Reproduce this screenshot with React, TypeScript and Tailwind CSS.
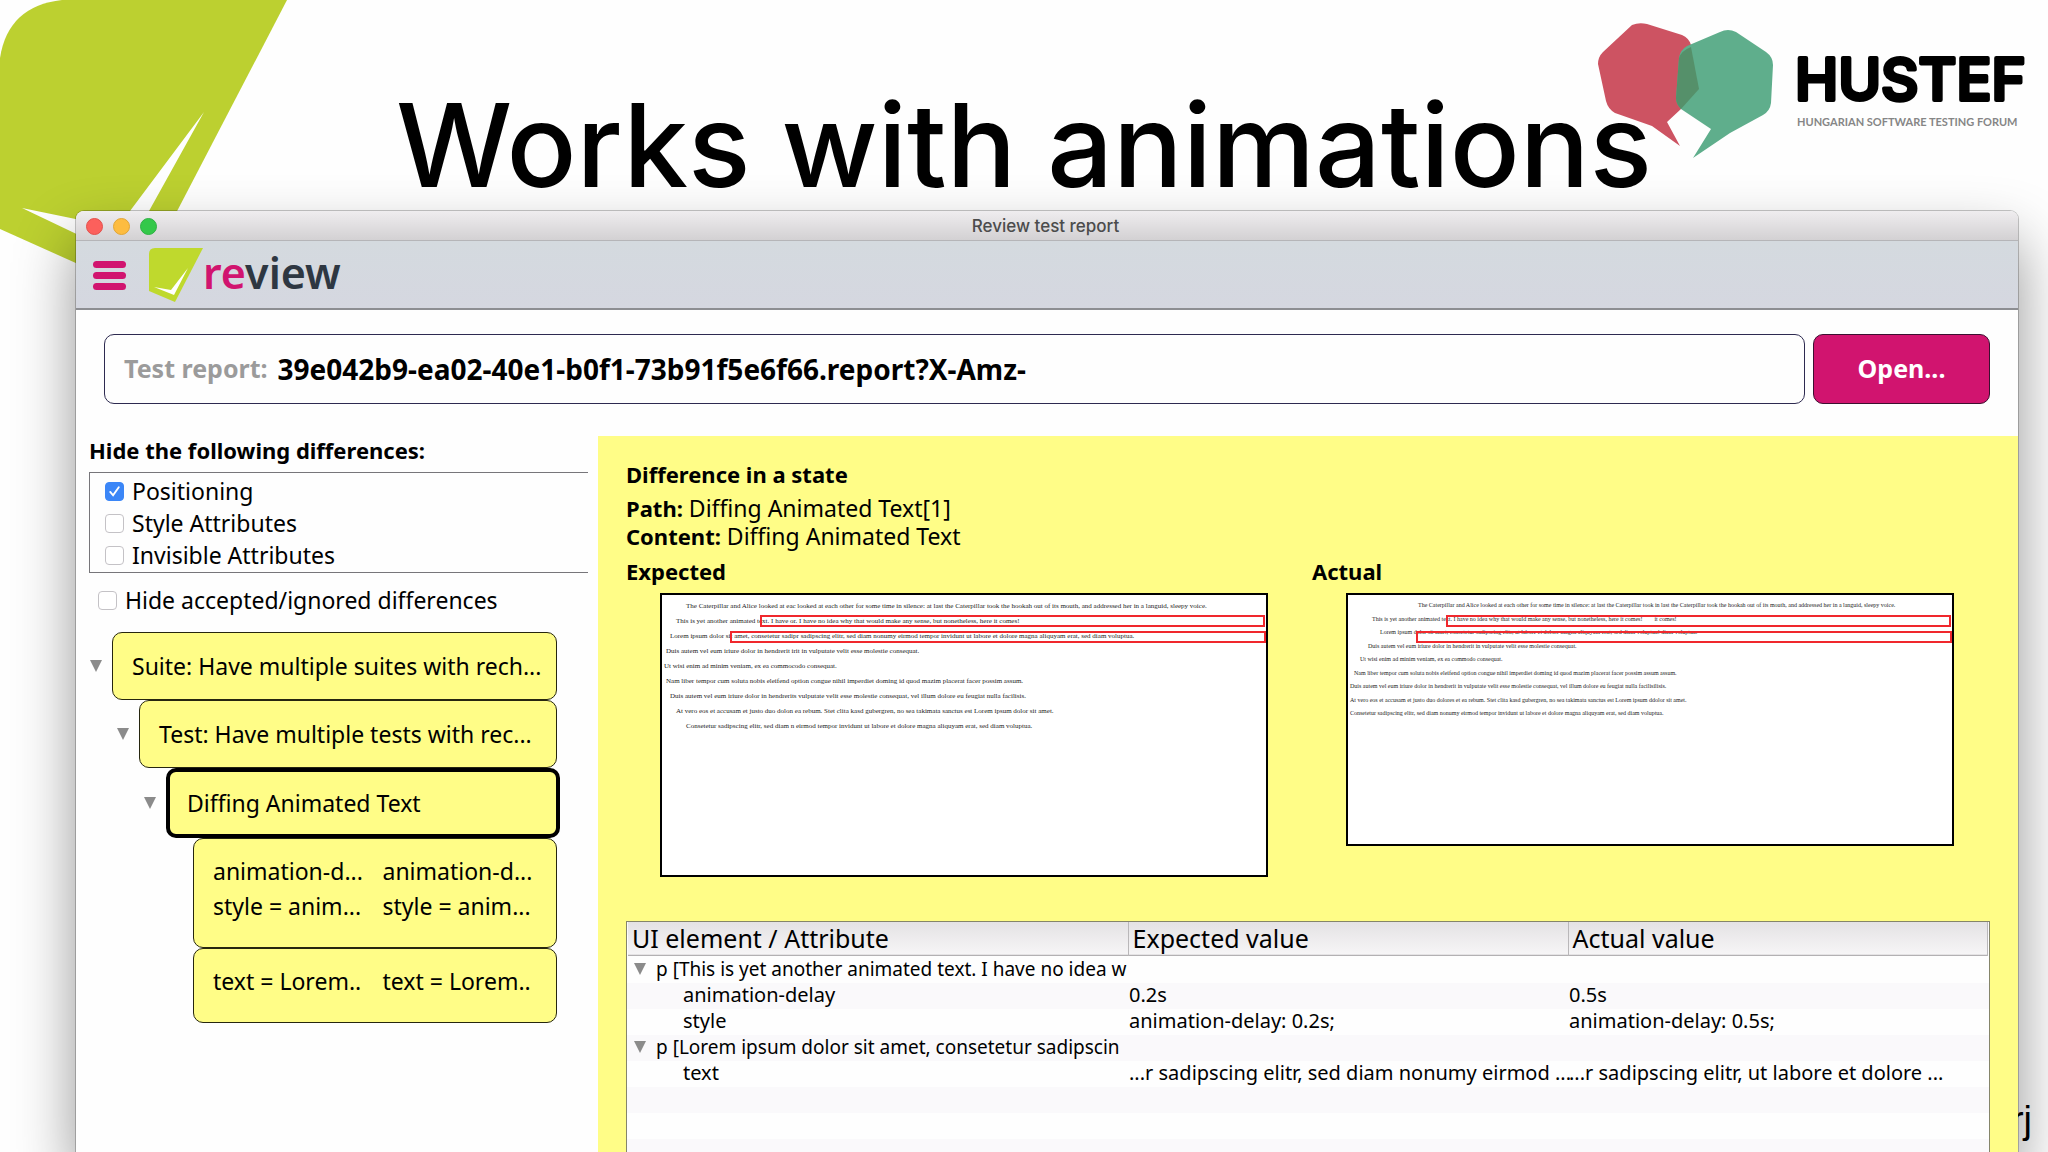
import { useState } from "react";

const FILTERS = ["Positioning", "Style Attributes", "Invisible Attributes"];

type Line = { text: string; indent: string };

const EXPECTED_LINES: Line[] = [
  { indent: "pl-6", text: "The Caterpillar and Alice looked at eac looked at each other for some time in silence: at last the Caterpillar took the hookah out of its mouth, and addressed her in a languid, sleepy voice." },
  { indent: "pl-3.5", text: "This is yet another animated text. I have or. I have no idea why that would make any sense, but nonetheless, here it comes!" },
  { indent: "pl-2", text: "Lorem ipsum dolor sit amet, consetetur sadipr sadipscing elitr, sed diam nonumy eirmod tempor invidunt ut labore et dolore magna aliquyam erat, sed diam voluptua." },
  { indent: "pl-1", text: "Duis autem vel eum iriure dolor in hendrerit irit in vulputate velit esse molestie consequat." },
  { indent: "pl-0.5", text: "Ut wisi enim ad minim veniam, ex ea commocodo consequat." },
  { indent: "pl-1", text: "Nam liber tempor cum soluta nobis eleifend option congue nihil imperdiet doming id quod mazim placerat facer possim assum." },
  { indent: "pl-2", text: "Duis autem vel eum iriure dolor in hendrerits vulputate velit esse molestie consequat, vel illum dolore eu feugiat nulla facilisis." },
  { indent: "pl-3.5", text: "At vero eos et accusam et justo duo dolon ea rebum. Stet clita kasd gubergren, no sea takimata sanctus est Lorem ipsum dolor sit amet." },
  { indent: "pl-6", text: "Consetetur sadipscing elitr, sed diam n eirmod tempor invidunt ut labore et dolore magna aliquyam erat, sed diam voluptua." },
];

const ACTUAL_LINES: Line[] = [
  { indent: "pl-[70px]", text: "The Caterpillar and Alice looked at each other for some time in silence: at last the Caterpillar took in last the Caterpillar took the hookah out of its mouth, and addressed her in a languid, sleepy voice." },
  { indent: "pl-6", text: "This is yet another animated text. I have no idea why that would make any sense, but nonetheless, here it comes!        it comes!" },
  { indent: "pl-8", text: "Lorem ipsum dolor sit amet, consetetur sadipscing elitr, ut labore et dolore magna aliquyam erat, sed diam voluptua! diam voluptua." },
  { indent: "pl-5", text: "Duis autem vel eum iriure dolor in hendrerit in vulputate velit esse molestie consequat." },
  { indent: "pl-3", text: "Ut wisi enim ad minim veniam, ex ea commodo consequat." },
  { indent: "pl-1.5", text: "Nam liber tempor cum soluta nobis eleifend option congue nihil imperdiet doming id quod mazim placerat facer possim assum assum." },
  { indent: "pl-0.5", text: "Duis autem vel eum iriure dolor in hendrerit in vulputate velit esse molestie consequat, vel illum dolore eu feugiat nulla facilisilisis." },
  { indent: "pl-0.5", text: "At vero eos et accusam et justo duo dolores et ea rebum. Stet clita kasd gubergren, no sea takimata sanctus est Lorem ipsum ddolor sit amet." },
  { indent: "pl-0.5", text: "Consetetur sadipscing elitr, sed diam nonumy eirmod tempor invidunt ut labore et dolore magna aliquyam erat, sed diam voluptua." },
];

const ROWS = [
  { parent: true, name: "p [This is yet another animated text. I have no idea w", expected: "", actual: "" },
  { parent: false, name: "animation-delay", expected: "0.2s", actual: "0.5s" },
  { parent: false, name: "style", expected: "animation-delay: 0.2s;", actual: "animation-delay: 0.5s;" },
  { parent: true, name: "p [Lorem ipsum dolor sit amet, consetetur sadipscin", expected: "", actual: "" },
  { parent: false, name: "text", expected: "...r sadipscing elitr, sed diam nonumy eirmod ...", actual: "...r sadipscing elitr, ut labore et dolore ..." },
];

function Triangle() {
  return (
    <svg viewBox="0 0 12 12" className="size-3 shrink-0 fill-[#8b8b8b]" aria-hidden>
      <path d="M0 0H12L6 12Z" />
    </svg>
  );
}

function Check({
  label,
  checked,
  onChange,
}: {
  label: string;
  checked: boolean;
  onChange: () => void;
}) {
  return (
    <label className="flex h-8 items-center gap-2 text-[23px] leading-8">
      <span className="relative size-[19px] shrink-0">
        <input
          type="checkbox"
          checked={checked}
          onChange={onChange}
          className="block size-[19px] appearance-none rounded-[4px] border border-[#c4c2c6] bg-white checked:border-[#3b86f7] checked:bg-[#3b86f7]"
        />
        {checked && (
          <svg viewBox="0 0 20 20" className="pointer-events-none absolute inset-0 fill-none stroke-white stroke-2" aria-hidden>
            <path d="M5.5 10.5L8.5 14L14.5 5.5" strokeLinecap="round" />
          </svg>
        )}
      </span>
      {label}
    </label>
  );
}

function Node({ label, indent }: { label: string; indent: string }) {
  return (
    <div className={`flex items-center gap-[10px] ${indent}`}>
      <Triangle />
      <button
        type="button"
        className="h-[68px] min-w-0 flex-1 rounded-[10px] border border-[#26260f] bg-[#fffd87] pl-[19px] text-left text-[23px] whitespace-nowrap"
      >
        {label}
      </button>
    </div>
  );
}

function Leaf({ rows }: { rows: string[] }) {
  return (
    <div className="ml-[103px] grid grid-cols-2 gap-x-4 rounded-[10px] border border-[#26260f] bg-[#fffd87] pt-[15px] pr-5 pb-[23px] pl-[19px] text-[23px] leading-[35px] whitespace-nowrap">
      {rows.map((row) => [<span key={row}>{row}</span>, <span key={`${row}-actual`}>{row}</span>])}
    </div>
  );
}

function HustefLogo() {
  return (
    <svg viewBox="0 0 488 180" className="absolute top-0 right-0 h-[180px] w-[488px]" role="img" aria-label="HUSTEF">
      <path
        d="M72 25Q79 22 87 24L122 35Q129 38 131 45L139 89L121 109L107 122L120 146L92 126Q75 120 55 113Q48 109 46 101L38 64Q38 57 43 52Z"
        fill="#cd5362"
      />
      <path
        d="M160 32Q168 28 176 32L206 52Q213 57 213 65L211 103Q210 111 203 115L170 133L133 158L151 129L121 109Q116 104 116 98L119 58Q120 50 127 46Z"
        fill="#5fae8c"
      />
      <path d="M131 47L139 89L121 109Q116 104 116 98L119 58Q121 51 131 47Z" fill="#55906a" />
      <text x="235" y="100" fontSize="58" stroke="black" strokeWidth="4" strokeLinejoin="round" fontWeight="500" fontFamily="Inter, sans-serif">
        HUSTEF
      </text>
      <text x="237" y="126" fontSize="11" fill="#868686" fontWeight="700" fontFamily="Lato, sans-serif">
        HUNGARIAN SOFTWARE TESTING FORUM
      </text>
    </svg>
  );
}

export default function App() {
  const [hidden, setHidden] = useState<string[]>(["Positioning"]);
  const [hideAccepted, setHideAccepted] = useState(false);
  const [report, setReport] = useState("39e042b9-ea02-40e1-b0f1-73b91f5e6f66.report?X-Amz-");

  const toggle = (name: string) =>
    setHidden((list) => (list.includes(name) ? list.filter((n) => n !== name) : [...list, name]));

  return (
    <div className="relative isolate flex h-screen flex-col overflow-hidden bg-[#fefefe] font-['Noto_Sans',sans-serif] text-black">
      <svg viewBox="0 0 300 300" className="absolute top-0 left-0 -z-10 size-[300px]" aria-hidden>
        <path d="M0 58Q8 6 62 0H287L136 290L0 229Z" fill="#bcd030" />
        <path d="M204 112L130 211L95 223L22 208L110 250L149 211Z" fill="#fefefe" />
      </svg>

      <h1 className="pt-20 text-center font-[Inter,sans-serif] text-[116px] leading-[131px] font-medium whitespace-nowrap">
        Works with animations
      </h1>

      <HustefLogo />

      <p className="absolute right-4 bottom-2 -z-10 font-['Liberation_Sans',sans-serif] text-[38px] leading-12">rj</p>

      <main className="mr-[30px] ml-[76px] flex min-h-0 flex-1 flex-col overflow-hidden rounded-t-lg bg-[#fefefe] shadow-[0_30px_60px_rgba(0,0,0,0.42),0_0_0_1px_rgba(0,0,0,0.22)]">
        <div className="flex h-[30px] shrink-0 items-center gap-[10px] border-b border-[#b5b5b8] bg-linear-to-b from-[#efedef] to-[#d3d1d3] px-[10px] pt-0.5">
          <button type="button" aria-label="Close" className="size-[17px] rounded-full border border-[#e2504c] bg-[#fc605c]" />
          <button type="button" aria-label="Minimize" className="size-[17px] rounded-full border border-[#e0a536] bg-[#fdbc40]" />
          <button type="button" aria-label="Zoom" className="size-[17px] rounded-full border border-[#2fb144] bg-[#34c84a]" />
          <h2 className="flex-1 pr-[84px] text-center font-[Inter,sans-serif] text-[17px] font-medium text-[#4c4c4c]">Review test report</h2>
        </div>

        <header className="flex h-[69px] shrink-0 items-center border-b-2 border-[#8d8e92] bg-linear-to-b from-[#d4dadf] to-[#d5d7e0] pl-[17px]">
          <button type="button" aria-label="Menu" className="mt-0.5 flex w-[33px] flex-col gap-1">
            <span className="h-[7px] rounded-full bg-[#d1146f]" />
            <span className="h-[7px] rounded-full bg-[#d1146f]" />
            <span className="h-[7px] rounded-full bg-[#d1146f]" />
          </button>
          <svg viewBox="0 0 54 54" className="ml-[23px] size-[54px]" aria-hidden>
            <path d="M0 6Q0 0 6 0H54L26 54L0 43Z" fill="#bfd92d" />
            <path d="M39 20L25 47L5 39L22 42Z" fill="#fff" />
          </svg>
          <span className="-mt-1 text-[43px] leading-none font-semibold text-[#2e3742]">
            <span className="text-[#d1146f]">re</span>view
          </span>
        </header>

        <div className="flex shrink-0 gap-2 px-7 pt-6 pb-8">
          <div className="flex h-[70px] flex-1 items-center gap-2.5 rounded-[10px] border border-[#2d2a50] px-[19px] font-bold">
            <label htmlFor="report" className="text-[25px] text-[#9b9b9b]">
              Test report:
            </label>
            <input
              id="report"
              value={report}
              onChange={(e) => setReport(e.target.value)}
              className="min-w-0 flex-1 bg-transparent text-[28px] focus:outline-none"
            />
          </div>
          <button type="button" className="h-[70px] w-[177px] rounded-[10px] border border-[#3c1030] bg-[#d1146f] text-[25px] font-bold text-white">
            Open...
          </button>
        </div>

        <div className="flex min-h-0 flex-1">
          <aside className="w-[522px] shrink-0 pl-[13px]">
            <h3 className="text-[22px] leading-7 font-bold">Hide the following differences:</h3>
            <div className="mt-2 mr-[10px] border border-r-0 border-[#77767a] pt-0.5 pb-px pl-[15px]">
              {FILTERS.map((name) => (
                <Check key={name} label={name} checked={hidden.includes(name)} onChange={() => toggle(name)} />
              ))}
            </div>
            <div className="mt-[11px] pl-[9px]">
              <Check label="Hide accepted/ignored differences" checked={hideAccepted} onChange={() => setHideAccepted((v) => !v)} />
            </div>

            <div className="mt-4 mr-[41px] ml-px flex flex-col">
              <Node indent="pl-0" label="Suite: Have multiple suites with rech..." />
              <Node indent="pl-[27px]" label="Test: Have multiple tests with rec..." />
              <div className="-mr-[3px] flex items-center gap-[10px] pl-[54px]">
                <Triangle />
                <button
                  type="button"
                  className="h-[70px] flex-1 rounded-[10px] border-4 border-black bg-[#fffd87] pl-[17px] text-left text-[23px]"
                >
                  Diffing Animated Text
                </button>
              </div>
              <Leaf rows={["animation-d...", "style = anim..."]} />
              <Leaf rows={["text = Lorem.."]} />
            </div>
          </aside>

          <section className="flex min-w-0 flex-1 flex-col bg-[#fffd87] px-7 pt-6 text-[23px] leading-7">
            <h3 className="text-[22px] font-bold">Difference in a state</h3>
            <p className="mt-1.5">
              <b className="text-[22px]">Path:</b> Diffing Animated Text[1]
            </p>
            <p>
              <b className="text-[22px]">Content:</b> Diffing Animated Text
            </p>

            <div className="mt-[7px] grid grid-cols-2 items-start gap-2">
              <figure>
                <figcaption className="text-[22px] font-bold">Expected</figcaption>
                <div className="relative mt-2 mr-9 ml-[34px] h-[284px] overflow-hidden border-2 border-black bg-white pt-1 font-['Liberation_Serif',serif] text-[7px] leading-[15px] whitespace-pre text-[#222]">
                  {EXPECTED_LINES.map((line) => (
                    <p key={line.text} className={line.indent}>
                      {line.text}
                    </p>
                  ))}
                  <span className="absolute top-5 right-px left-[98px] h-3 border-2 border-[#f0282d]" />
                  <span className="absolute top-9 right-0 left-[68px] h-3 border-2 border-[#f0282d]" />
                </div>
              </figure>
              <figure>
                <figcaption className="text-[22px] font-bold">Actual</figcaption>
                <div className="relative mt-2 mr-9 ml-[34px] h-[253px] overflow-hidden border-2 border-black bg-white pt-1 font-['Liberation_Serif',serif] text-[6px] leading-[12px] whitespace-pre text-[#222]">
                  <div className="flex h-[120px] flex-col justify-between">
                    {ACTUAL_LINES.map((line) => (
                      <p key={line.text} className={line.indent}>
                        {line.text}
                      </p>
                    ))}
                  </div>
                  <span className="absolute top-5 right-px left-[98px] h-3 border-2 border-[#f0282d]" />
                  <span className="absolute top-9 right-0 left-[68px] h-3 border-2 border-[#f0282d]" />
                </div>
              </figure>
            </div>

            <div className="mt-11 min-h-0 flex-1 overflow-hidden border border-b-0 border-[#85856a] bg-[repeating-linear-gradient(to_bottom,#fefefe_0,#fefefe_26px,#faf9fb_26px,#faf9fb_52px)] bg-[position:0_35px] px-px">
              <table className="w-full table-fixed border-collapse text-left">
                <thead>
                  <tr className="h-[33px] border-b border-[#b3b1b3] bg-linear-to-b from-[#e4e2e4] to-[#f6f5f6] text-[25px] leading-8">
                    <th className="w-[500px] border-r border-[#b9b7b9] p-0 pl-1 font-normal">UI element / Attribute</th>
                    <th className="w-[440px] border-r border-[#b9b7b9] p-0 pl-1 font-normal">Expected value</th>
                    <th className="border-r border-[#b9b7b9] p-0 pl-1 font-normal">Actual value</th>
                  </tr>
                </thead>
                <tbody className="text-[20px] leading-[26px]">
                  {ROWS.map((row) => (
                    <tr key={row.name}>
                      <td className="overflow-hidden p-0 whitespace-nowrap">
                        {row.parent ? (
                          <span className="flex items-center gap-[10px] pl-[6px] text-[19px]">
                            <Triangle />
                            {row.name}
                          </span>
                        ) : (
                          <span className="pl-[55px]">{row.name}</span>
                        )}
                      </td>
                      <td className="p-0 pl-px whitespace-nowrap">{row.expected}</td>
                      <td className="p-0 pl-px whitespace-nowrap">{row.actual}</td>
                    </tr>
                  ))}
                </tbody>
              </table>
            </div>
          </section>
        </div>
      </main>
    </div>
  );
}
